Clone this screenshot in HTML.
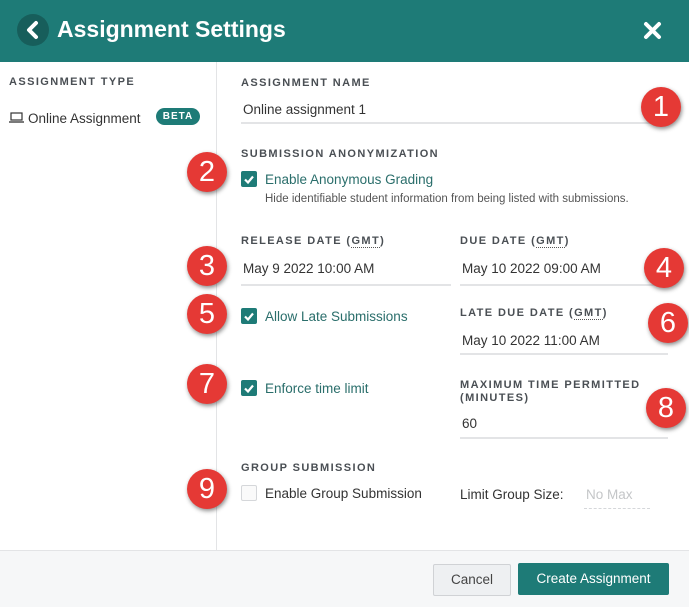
<!DOCTYPE html>
<html><head><style>
body{margin:0;width:689px;height:606px;position:relative;font-family:"Liberation Sans",sans-serif;background:#fff;overflow:hidden}
.a{position:absolute}
.hdr{left:0;top:0;width:689px;height:62px;background:#1e7b77}
.lbl{font-size:11px;font-weight:bold;letter-spacing:1.4px;color:#4a4f54}
.val{font-size:13.5px;color:#333}
.line{height:2px;background:#e3e4e6}
.cb{width:16px;height:16px;background:#1e7b77;border-radius:2px}
.cb svg{display:block}
.ct{font-size:13.5px;color:#2a6e6b}
.b{width:40px;height:40px;border-radius:50%;background:#e53935;color:#fff;font-size:29px;text-align:center;line-height:40px;box-shadow:1px 2px 4px rgba(0,0,0,.45)}
</style></head><body>
<div class="a hdr"></div>
<div class="a" style="left:17px;top:14px;width:32px;height:32px;border-radius:50%;background:#175e5b"></div>
<svg class="a" style="left:17px;top:14px" width="32" height="32"><path d="M19 9l-7 7 7 7" stroke="#fff" stroke-width="4" fill="none" stroke-linecap="round" stroke-linejoin="round"/></svg>
<div class="a" style="left:57px;top:16px;font-size:23px;font-weight:bold;color:#fff">Assignment Settings</div>
<svg class="a" style="left:643px;top:21px" width="19" height="19"><path d="M3 3l13 13M16 3L3 16" stroke="#fff" stroke-width="4" stroke-linecap="round"/></svg>
<div class="a" style="left:216px;top:62px;width:1px;height:488px;background:#e3e4e6"></div>
<div class="a lbl" style="left:9px;top:76px">ASSIGNMENT TYPE</div>
<svg class="a" style="left:9px;top:112px" width="15" height="12"><rect x="2" y="1" width="11" height="7" fill="none" stroke="#333" stroke-width="1.2"/><path d="M0 10h15" stroke="#333" stroke-width="1.3"/></svg>
<div class="a val" style="left:28px;top:111px">Online Assignment</div>
<div class="a" style="left:156px;top:108px;width:44px;height:17px;border-radius:9px;background:#1e7b77;color:#fff;font-size:10px;font-weight:bold;letter-spacing:1px;text-align:center;line-height:17px">BETA</div>

<div class="a lbl" style="left:241px;top:77px">ASSIGNMENT NAME</div>
<div class="a val" style="left:243px;top:102px">Online assignment 1</div>
<div class="a line" style="left:241px;top:122px;width:410px"></div>

<div class="a lbl" style="left:241px;top:148px">SUBMISSION ANONYMIZATION</div>
<div class="a cb" style="left:241px;top:171px"><svg width="16" height="16"><path d="M4 8.5l3 3 5-6" stroke="#fff" stroke-width="2.2" fill="none"/></svg></div>
<div class="a ct" style="left:265px;top:172px">Enable Anonymous Grading</div>
<div class="a" style="left:265px;top:193px;font-size:11.5px;color:#555">Hide identifiable student information from being listed with submissions.</div>

<div class="a lbl" style="left:241px;top:235px">RELEASE DATE (<span style="border-bottom:1px dotted #555">GMT</span>)</div>
<div class="a val" style="left:243px;top:261px">May 9 2022 10:00 AM</div>
<div class="a line" style="left:241px;top:284px;width:210px"></div>
<div class="a lbl" style="left:460px;top:235px">DUE DATE (<span style="border-bottom:1px dotted #555">GMT</span>)</div>
<div class="a val" style="left:462px;top:261px">May 10 2022 09:00 AM</div>
<div class="a line" style="left:460px;top:284px;width:208px"></div>

<div class="a cb" style="left:241px;top:308px"><svg width="16" height="16"><path d="M4 8.5l3 3 5-6" stroke="#fff" stroke-width="2.2" fill="none"/></svg></div>
<div class="a ct" style="left:265px;top:309px">Allow Late Submissions</div>
<div class="a lbl" style="left:460px;top:307px">LATE DUE DATE (<span style="border-bottom:1px dotted #555">GMT</span>)</div>
<div class="a val" style="left:462px;top:333px">May 10 2022 11:00 AM</div>
<div class="a line" style="left:460px;top:353px;width:208px"></div>

<div class="a cb" style="left:241px;top:380px"><svg width="16" height="16"><path d="M4 8.5l3 3 5-6" stroke="#fff" stroke-width="2.2" fill="none"/></svg></div>
<div class="a ct" style="left:265px;top:381px">Enforce time limit</div>
<div class="a lbl" style="left:460px;top:379px;line-height:13px">MAXIMUM TIME PERMITTED<br>(MINUTES)</div>
<div class="a val" style="left:462px;top:416px">60</div>
<div class="a line" style="left:460px;top:437px;width:208px"></div>

<div class="a lbl" style="left:241px;top:462px">GROUP SUBMISSION</div>
<div class="a" style="left:241px;top:485px;width:14px;height:14px;border:1px solid #d5d7da;border-radius:2px;background:#fafafa"></div>
<div class="a val" style="left:265px;top:486px">Enable Group Submission</div>
<div class="a val" style="left:460px;top:487px">Limit Group Size:</div>
<div class="a" style="left:586px;top:487px;font-size:13.5px;color:#c4c6c8">No Max</div>
<div class="a" style="left:584px;top:508px;width:66px;border-top:1px dashed #d5d7da"></div>

<div class="a" style="left:0;top:550px;width:689px;height:56px;background:#f6f7f8;border-top:1px solid #e3e4e6"></div>
<div class="a" style="left:433px;top:564px;width:76px;height:30px;border:1px solid #d0d2d5;background:#eef0f2;border-radius:2px;font-size:13.5px;color:#444;text-align:center;line-height:30px">Cancel</div>
<div class="a" style="left:518px;top:563px;width:151px;height:32px;background:#1e7b77;border-radius:2px;font-size:13.5px;color:#fff;text-align:center;line-height:32px">Create Assignment</div>

<div class="a b" style="left:641px;top:87px">1</div>
<div class="a b" style="left:187px;top:152px">2</div>
<div class="a b" style="left:187px;top:246px">3</div>
<div class="a b" style="left:644px;top:248px">4</div>
<div class="a b" style="left:187px;top:294px">5</div>
<div class="a b" style="left:648px;top:303px">6</div>
<div class="a b" style="left:187px;top:364px">7</div>
<div class="a b" style="left:646px;top:388px">8</div>
<div class="a b" style="left:187px;top:469px">9</div>
</body></html>
